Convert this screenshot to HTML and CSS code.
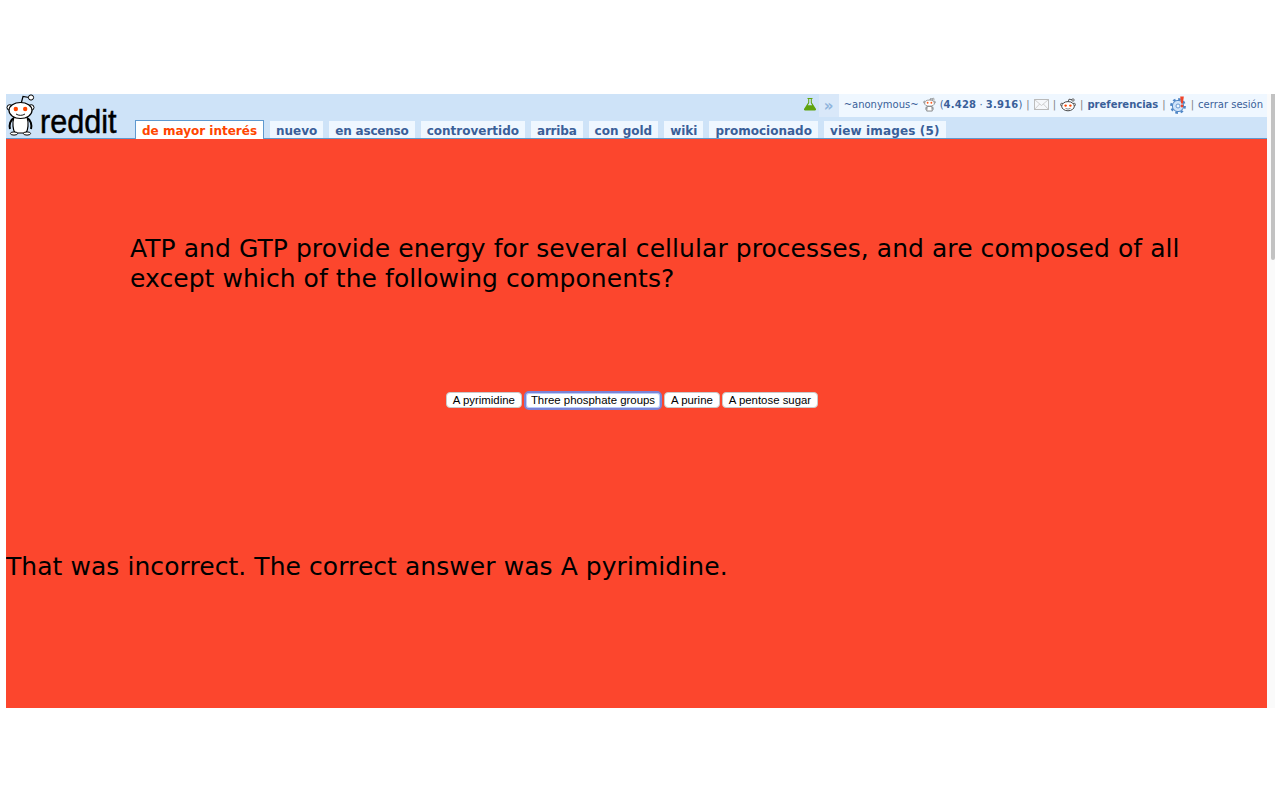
FILE: index.html
```html
<!DOCTYPE html>
<html lang="en">
<head>
  <meta charset="UTF-8">
  <title>reddit quiz</title>
  <meta name="viewport" content="width=device-width, initial-scale=1.0">
  <link rel="stylesheet" href="styles.css">
</head>
<body>
  <div class="marco">
    <div class="pagina">
      <header class="cabecera">
        <a class="logo" href="#">
          <svg class="alien" width="31" height="42" viewBox="0 0 31 42">
            <path d="M15 10 L17 2.5 L23 3.5" fill="none" stroke="#000" stroke-width="1.2"/>
            <circle cx="25" cy="3.5" r="2.6" fill="#fff" stroke="#000" stroke-width="1"/>
            <circle cx="3.8" cy="13.5" r="2.8" fill="#fff" stroke="#000" stroke-width="1"/>
            <circle cx="25.2" cy="13.5" r="2.8" fill="#fff" stroke="#000" stroke-width="1"/>
            <path d="M8 24 C4 26 3 31 4 35 M21 24 C25 26 26 31 25 35" fill="none" stroke="#000" stroke-width="2"/>
            <path d="M8 23 C6 29 7 36 9 39 H20 C22 36 23 29 21 23 Z" fill="#fff" stroke="#000" stroke-width="1.2"/>
            <ellipse cx="8" cy="39.5" rx="3.6" ry="1.6" fill="#fff" stroke="#000" stroke-width="1"/>
            <ellipse cx="21" cy="39.5" rx="3.6" ry="1.6" fill="#fff" stroke="#000" stroke-width="1"/>
            <ellipse cx="14.5" cy="16.5" rx="11.5" ry="8" fill="#fff" stroke="#000" stroke-width="1.2"/>
            <circle cx="9.8" cy="15" r="2.2" fill="#ff4500"/>
            <circle cx="19.2" cy="15" r="2.2" fill="#ff4500"/>
            <path d="M10 20 C12.5 21.8 16.5 21.8 19 20" fill="none" stroke="#000" stroke-width="0.9"/>
          </svg>
          <span class="logo-texto">reddit</span>
        </a>
        <div class="derecha">
          <svg class="matraz" width="14" height="14" viewBox="0 0 14 14">
            <path d="M4.5 1 H9.5 V2 H8.8 V5.5 L13 12 Q13.4 13.4 12 13.4 H2 Q.6 13.4 1 12 L5.2 5.5 V2 H4.5 Z" fill="#5fa30c"/>
            <path d="M6.2 2 H7.8 V6 L9.2 8.2 H4.8 L6.2 6 Z" fill="#cfe3f9"/>
          </svg>
          <span class="mas">»</span>
          <div class="usuario">
            <a class="nombre" href="#">~anonymous~</a>
            <svg class="snoo" width="13" height="16" viewBox="0 0 14 16">
              <path d="M7 4 L8 1.2 L10.5 1.6" fill="none" stroke="#555" stroke-width=".7"/>
              <circle cx="11" cy="1.7" r="1" fill="#fff" stroke="#666" stroke-width=".6"/>
              <circle cx="1.8" cy="5" r="1.2" fill="#ddd" stroke="#777" stroke-width=".6"/>
              <circle cx="12.2" cy="5" r="1.2" fill="#ddd" stroke="#777" stroke-width=".6"/>
              <ellipse cx="7" cy="6" rx="5.2" ry="3.3" fill="#fff" stroke="#666" stroke-width=".7"/>
              <circle cx="5" cy="5.6" r="1" fill="#ff5a1a"/>
              <circle cx="9" cy="5.6" r="1" fill="#ff5a1a"/>
              <path d="M4.5 9.5 H9.5 L10 14.5 H4 Z" fill="#fff" stroke="#666" stroke-width=".8"/>
              <path d="M3.5 10 L3 13 M10.5 10 L11 13" stroke="#777" stroke-width="1"/>
            </svg>
            <span class="karma">(<b>4.428</b> · <b>3.916</b>)</span>
            <span class="sep">|</span>
            <svg class="sobre" width="15" height="11" viewBox="0 0 16 11" preserveAspectRatio="none">
              <rect x=".5" y=".5" width="15" height="10" fill="#f6f8fb" stroke="#b9b9b9"/>
              <path d="M.5 .5 L8 6.5 L15.5 .5 M.5 10.5 L6 5 M15.5 10.5 L10 5" fill="none" stroke="#c4c4c4" stroke-width=".8"/>
            </svg>
            <span class="sep">|</span>
            <svg class="cara" width="16" height="14" viewBox="0 0 16 14">
              <path d="M8 4 L9 1.2 L12.5 1.8" fill="none" stroke="#333" stroke-width=".8"/>
              <circle cx="13" cy="2" r="1.2" fill="#fff" stroke="#333" stroke-width=".7"/>
              <circle cx="1.9" cy="6.6" r="1.4" fill="#fff" stroke="#333" stroke-width=".7"/>
              <circle cx="14.1" cy="6.6" r="1.4" fill="#fff" stroke="#333" stroke-width=".7"/>
              <ellipse cx="8" cy="8.2" rx="6.3" ry="4.6" fill="#fff" stroke="#333" stroke-width=".9"/>
              <circle cx="5.6" cy="7.6" r="1.2" fill="#ff4500"/>
              <circle cx="10.4" cy="7.6" r="1.2" fill="#ff4500"/>
              <path d="M5.5 10.4 Q8 11.8 10.5 10.4" fill="none" stroke="#333" stroke-width=".6"/>
            </svg>
            <span class="sep">|</span>
            <a class="fuerte" href="#">preferencias</a>
            <span class="sep">|</span>
            <svg class="engrane" width="17" height="18" viewBox="0 0 17 18">
              <circle cx="8" cy="10" r="6.7" fill="none" stroke="#4f86c6" stroke-width="2.4" stroke-dasharray="2.6 2.66"/>
              <circle cx="8" cy="10" r="5.6" fill="#cfe3f9" stroke="#4f86c6" stroke-width="1"/>
              <circle cx="8" cy="10" r="2" fill="#eff7ff" stroke="#4f86c6" stroke-width=".8"/>
              <path d="M10.2 .5 H13.8 L12.9 7.6 H11.1 Z" fill="#f0452a"/>
              <circle cx="12" cy="10" r="1.4" fill="#f0452a"/>
            </svg>
            <span class="sep">|</span>
            <a href="#">cerrar sesión</a>
          </div>
        </div>
        <ul class="pestanas">
          <li class="activa"><a href="#">de mayor interés</a></li>
          <li><a href="#">nuevo</a></li>
          <li class="estrecha"><a href="#">en ascenso</a></li>
          <li><a href="#">controvertido</a></li>
          <li class="estrecha"><a href="#">arriba</a></li>
          <li><a href="#">con gold</a></li>
          <li><a href="#">wiki</a></li>
          <li><a href="#">promocionado</a></li>
          <li class="ancha"><a href="#">view images (5)</a></li>
        </ul>
      </header>
      <main class="contenido">
        <h1 class="pregunta">ATP and GTP provide energy for several cellular processes, and are composed of all except which of the following components?</h1>
        <div class="opciones">
          <button>A pyrimidine</button>
          <button class="foco">Three phosphate groups</button>
          <button>A purine</button>
          <button>A pentose sugar</button>
        </div>
        <p class="resultado">That was incorrect. The correct answer was A pyrimidine.</p>
      </main>
    </div>
    <div class="barra"><div class="pulgar"></div></div>
  </div>
</body>
</html>
```

FILE: styles.css
```css
body {
  margin: 0;
  background: #fff;
  font-family: "DejaVu Sans", sans-serif;
}
a {
  text-decoration: none;
  color: #3a5f99;
}
.marco {
  display: flex;
  padding: 94px 5px 0 6px;
}
.pagina {
  width: 1261px;
}
.barra {
  width: 8px;
  height: 614px;
  background: #fafafa;
}
.pulgar {
  width: 4px;
  height: 166px;
  margin-left: 4px;
  background: #c2c2c2;
  border-radius: 0 0 2px 2px;
}
.cabecera {
  display: grid;
  grid-template-columns: 129px 1fr;
  grid-template-rows: 23px 21px;
  background: #cee3f8;
  border-bottom: 1px solid #5f99cf;
}
.logo {
  grid-row: 1 / 3;
  display: flex;
  align-items: flex-end;
  color: #000;
}
.alien {
  flex: none;
  margin-bottom: 2px;
}
.logo-texto {
  font-family: "Liberation Sans", sans-serif;
  font-size: 34px;
  line-height: 34px;
  margin: 0 0 0 3px;
  transform: scaleX(.9);
  transform-origin: left;
  -webkit-text-stroke: .5px #000;
}
.pestanas {
  grid-column: 2;
  display: flex;
  align-items: flex-end;
  gap: 6px;
  list-style: none;
  margin: 0;
  padding: 0;
}
.pestanas li {
  height: 17px;
  background: #eff7ff;
  padding: 0 6px;
  font-size: 12px;
  font-weight: bold;
  line-height: 20px;
  white-space: nowrap;
}
.pestanas li.estrecha {
  letter-spacing: -.2px;
}
.pestanas li.ancha {
  letter-spacing: .15px;
}
.pestanas li.activa {
  background: #fff;
  border: 1px solid #5f99cf;
  border-bottom: none;
  margin-bottom: -1px;
  height: 18px;
}
.pestanas li.activa a {
  color: #ff4500;
}
.derecha {
  grid-column: 2;
  display: flex;
  align-items: flex-start;
  justify-content: flex-end;
}
.matraz {
  margin: 3px 2px 0 0;
}
.mas {
  width: 20px;
  height: 23px;
  background: #d9e8f9;
  color: #8fb4dc;
  font-size: 15px;
  font-weight: bold;
  line-height: 24px;
  text-align: center;
}
.usuario {
  display: flex;
  align-items: center;
  gap: 4px;
  height: 23px;
  padding: 0 4px 2px 5px;
  box-sizing: border-box;
  background: #eff7ff;
  font-size: 10px;
  white-space: nowrap;
  color: #3a5f99;
}
.karma b {
  font-weight: bold;
  letter-spacing: .2px;
}
.fuerte {
  font-weight: bold;
}
.sep {
  color: #808080;
}
.contenido {
  height: 569px;
  background: #fc462d;
  overflow: hidden;
}
.pregunta {
  margin: 0;
  padding: 95px 80px 0 124px;
  font-size: 25px;
  line-height: 30px;
  font-weight: normal;
  letter-spacing: .06px;
  color: #000;
}
.opciones {
  display: flex;
  justify-content: center;
  align-items: center;
  gap: 2px;
  margin-top: 98px;
  padding-right: 9px;
}
.opciones button {
  height: 16px;
  padding: 0 6px;
  margin: 0;
  background: #fff;
  border: 1px solid #c9c9c9;
  border-radius: 4px;
  font-family: "Liberation Sans", sans-serif;
  font-size: 11.4px;
  line-height: 14px;
  color: #000;
}
.opciones button.foco {
  height: 19px;
  margin: -1.5px 0;
  padding: 0 5px;
  border: 2px solid #7b83d6;
  border-radius: 5px;
  box-shadow: inset 0 0 0 1px #b8cdf8;
}
.resultado {
  margin: 144px 0 0;
  font-size: 25px;
  line-height: 30px;
  letter-spacing: .06px;
  color: #000;
}
```
